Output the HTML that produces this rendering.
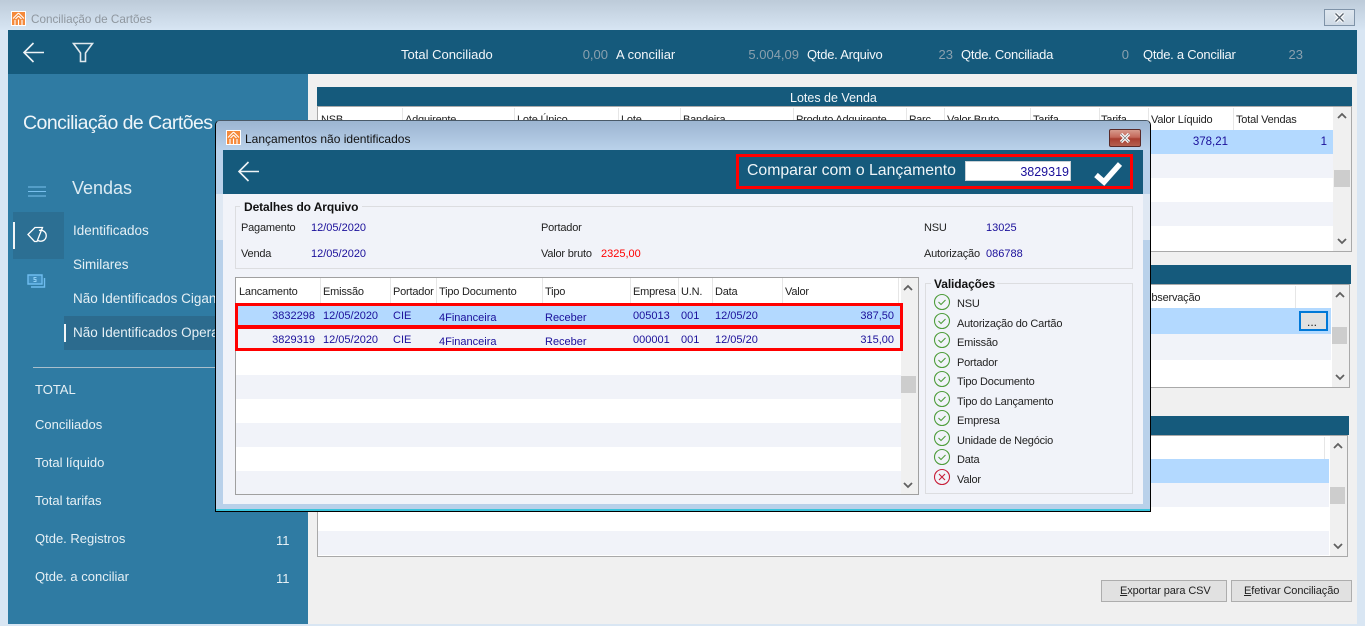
<!DOCTYPE html>
<html lang="pt"><head><meta charset="utf-8"><title>Conciliação de Cartões</title>
<style>
html,body{margin:0;padding:0;width:1365px;height:626px;overflow:hidden;background:#d9e6f3}
body{position:relative;font-family:"Liberation Sans",Arial,sans-serif;font-size:11px;color:#222}
div,span,svg{position:absolute;box-sizing:border-box}
.t{white-space:nowrap;line-height:16px;height:16px}
.n{color:#1a0f9a;font-size:11px;margin-top:1px}
.w{color:#f2f7fa}
.h{color:#222;font-size:11px;letter-spacing:-.2px;margin-top:1px}
.sep{width:1px;background:#e6e6e6}
.m{color:#e6f0f5;font-size:13.500px;margin-top:1px}
.s{color:#e6f0f5;font-size:13px}
.top{color:#f2f7fa;font-size:13px;top:47px}
.tq{letter-spacing:-.25px}
.gv{color:#8aa0ae;font-size:13px;top:47px}
</style></head><body>
<!-- window chrome -->
<div style="left:0;top:0;width:1365px;height:30px;background:linear-gradient(#bdcbd9,#d7e5f3)"></div>
<div style="left:11px;top:11px;width:15px;height:15px;background:#fff"></div>
<svg style="left:12px;top:12px" width="13" height="13" viewBox="0 0 13 13"><rect width="13" height="13" fill="#f58a3c"/><path d="M6.500 1L1 6.500M6.500 1L12 6.500M6.500 4L3.500 7M6.500 4L9.500 7M3 8v5M6.500 7.500V13M10 8v5" stroke="#fff" stroke-width="1.100" fill="none"/></svg>
<span class="t" style="left:31px;top:12px;color:#8f979f;font-size:11.700px">Conciliação de Cartões</span>
<div style="left:1324px;top:9px;width:31px;height:17px;border:1px solid #7f93a8;background:linear-gradient(#dfe7ef,#cdd9e5)"></div>
<svg style="left:1334px;top:12px" width="11" height="11" viewBox="0 0 11 11"><path d="M1.500 1.500l8 8M9.500 1.500l-8 8" stroke="#fff" stroke-width="3.600"/><path d="M1.500 1.500l8 8M9.500 1.500l-8 8" stroke="#59636e" stroke-width="1.300"/></svg>

<div style="left:8px;top:30px;width:1349px;height:44px;background:#155a7c"></div>
<svg style="left:22px;top:42px" width="23" height="21" viewBox="0 0 23 21"><path d="M22 10.500H2M11.500 1L2 10.500 11.500 20" fill="none" stroke="#eef3f6" stroke-width="1.600"/></svg>
<svg style="left:72px;top:42px" width="22" height="21" viewBox="0 0 22 21"><path d="M1.500 1.500h19l-7 9.500v8.500h-5V11z" fill="none" stroke="#dfe8ed" stroke-width="1.600"/></svg>
<span class="t top" style="left:401px">Total Conciliado</span>
<span class="t gv" style="right:757px">0,00</span>
<span class="t top" style="left:616px">A conciliar</span>
<span class="t gv" style="right:566px">5.004,09</span>
<span class="t top tq" style="left:807px">Qtde. Arquivo</span>
<span class="t gv" style="right:412px">23</span>
<span class="t top tq" style="left:961px">Qtde. Conciliada</span>
<span class="t gv" style="right:236px">0</span>
<span class="t top tq" style="left:1143px">Qtde. a Conciliar</span>
<span class="t gv" style="right:62px">23</span>

<!-- sidebar -->
<div style="left:8px;top:74px;width:300px;height:550px;background:#2f7ba3"></div>
<span class="t" style="left:23px;top:111px;line-height:24px;height:24px;font-size:19.500px;letter-spacing:-.55px;color:#eef5f9">Conciliação de Cartões</span>
<svg style="left:28px;top:186px" width="18" height="11" viewBox="0 0 18 11"><path d="M0 1h18M0 5.500h18M0 10h18" stroke="#79c0ee" stroke-width="1"/></svg>
<span class="t" style="left:72px;top:176px;line-height:24px;height:24px;font-size:18px;color:#dcebf3">Vendas</span>
<div style="left:13px;top:212px;width:51px;height:47px;background:#2c6f93"></div>
<div style="left:13px;top:222px;width:2px;height:27px;background:#f2f5f7"></div>
<svg style="left:27px;top:226px" width="20" height="17" viewBox="0 0 20 17"><path d="M1 8.500L8 1.500h7.500L10 15.500H7.500z" fill="none" stroke="#fff" stroke-width="1.300"/><path d="M12 4.500a5.500 5.500 0 1 1-1 10" fill="none" stroke="#fff" stroke-width="1.300"/></svg>
<svg style="left:27px;top:274px" width="19" height="14" viewBox="0 0 19 14"><path d="M1 1h14v9H1z" fill="#3f8dbd" stroke="#6fbdf0" stroke-width="1.400"/><path d="M17.500 4v9H4" fill="none" stroke="#6fbdf0" stroke-width="1.400"/><path d="M9.500 3.500H7v2h2v2H6.500" fill="none" stroke="#8fd0f5" stroke-width="1"/></svg>
<span class="t m" style="left:73px;top:222px">Identificados</span>
<span class="t m" style="left:73px;top:256px">Similares</span>
<span class="t m" style="left:73px;top:290px">Não Identificados Ciganos</span>
<div style="left:64px;top:316px;width:155px;height:34px;background:#2c6b8e"></div>
<div style="left:64px;top:324px;width:2px;height:18px;background:#f2f5f7"></div>
<span class="t m" style="left:73px;top:324px">Não Identificados Operadora</span>
<div style="left:33px;top:367px;width:185px;height:1px;background:#a9bfcc"></div>
<span class="t s" style="left:35px;top:382px">TOTAL</span>
<span class="t s" style="left:35px;top:417px">Conciliados</span>
<span class="t s" style="left:35px;top:455px">Total líquido</span>
<span class="t s" style="left:35px;top:493px">Total tarifas</span>
<span class="t s" style="left:35px;top:531px">Qtde. Registros</span>
<span class="t s" style="left:35px;top:569px">Qtde. a conciliar</span>
<span class="t s" style="left:276px;top:533px">11</span>
<span class="t s" style="left:276px;top:571px">11</span>

<!-- main -->
<div style="left:308px;top:74px;width:1049px;height:550px;background:#f0f0f0"></div>
<!-- Lotes -->
<div style="left:317px;top:87px;width:1035px;height:19px;background:#155a7c"></div>
<span class="t w" style="left:790px;top:90px;font-size:12.500px">Lotes de Venda</span>
<div style="left:317px;top:106px;width:1035px;height:146px;background:#fff;border:1px solid #a9a9a9"></div>
<div style="left:318px;top:130px;width:1015px;height:24px;background:#b3d9ff"></div>
<div style="left:318px;top:154px;width:1015px;height:24px;background:#f1f3f9"></div>
<div style="left:318px;top:202px;width:1015px;height:24px;background:#f1f3f9"></div>
<div style="left:1333px;top:107px;width:18px;height:144px;background:#f0f0f0"></div>
<div style="left:1334px;top:170px;width:16px;height:17px;background:#cdcdcd"></div>
<svg style="left:1336px;top:112px" width="12" height="8" viewBox="0 0 12 8"><path d="M2 6l4-4 4 4" fill="none" stroke="#606060" stroke-width="1.800"/></svg>
<svg style="left:1336px;top:237px" width="12" height="8" viewBox="0 0 12 8"><path d="M2 2l4 4 4-4" fill="none" stroke="#606060" stroke-width="1.800"/></svg>
<div class="sep" style="left:402px;top:108px;height:22px"></div><div class="sep" style="left:514px;top:108px;height:22px"></div><div class="sep" style="left:618px;top:108px;height:22px"></div><div class="sep" style="left:680px;top:108px;height:22px"></div><div class="sep" style="left:793px;top:108px;height:22px"></div><div class="sep" style="left:906px;top:108px;height:22px"></div><div class="sep" style="left:944px;top:108px;height:22px"></div><div class="sep" style="left:1030px;top:108px;height:22px"></div><div class="sep" style="left:1099px;top:108px;height:22px"></div><div class="sep" style="left:1148px;top:108px;height:22px"></div><div class="sep" style="left:1233px;top:108px;height:22px"></div>
<span class="t h" style="left:321px;top:111px">NSB</span><span class="t h" style="left:405px;top:111px">Adquirente</span><span class="t h" style="left:517px;top:111px">Lote Único</span><span class="t h" style="left:621px;top:111px">Lote</span><span class="t h" style="left:683px;top:111px">Bandeira</span><span class="t h" style="left:796px;top:111px">Produto Adquirente</span><span class="t h" style="left:909px;top:111px">Parc</span><span class="t h" style="left:947px;top:111px">Valor Bruto</span><span class="t h" style="left:1033px;top:111px">Tarifa</span><span class="t h" style="left:1101px;top:111px">Tarifa</span><span class="t h" style="left:1151px;top:111px">Valor Líquido</span><span class="t h" style="left:1236px;top:111px">Total Vendas</span>
<span class="t n" style="right:137px;top:134px;font-size:11.500px;margin-top:0">378,21</span><span class="t n" style="right:38px;top:134px;font-size:11.500px;margin-top:0">1</span>

<!-- panel 2 -->
<div style="left:317px;top:265px;width:1034px;height:19px;background:#155a7c"></div>
<div style="left:317px;top:284px;width:1033px;height:104px;background:#fff;border:1px solid #a9a9a9"></div>
<div style="left:318px;top:308px;width:1013px;height:26px;background:#b3d9ff"></div>
<div style="left:318px;top:334px;width:1013px;height:26px;background:#f1f3f9"></div>
<div class="sep" style="left:1295px;top:286px;height:22px"></div>
<span class="t h" style="left:1143px;top:289px">Observação</span>
<div style="left:1299px;top:311px;width:29px;height:20px;background:#e1e1e1;border:2px solid #0078d7"></div>
<span class="t" style="left:1307px;top:314px;color:#222;font-size:12px">...</span>
<div style="left:1332px;top:285px;width:17px;height:102px;background:#f0f0f0"></div>
<div style="left:1332px;top:327px;width:15px;height:17px;background:#cdcdcd"></div>
<svg style="left:1334px;top:291px" width="12" height="8" viewBox="0 0 12 8"><path d="M2 6l4-4 4 4" fill="none" stroke="#606060" stroke-width="1.800"/></svg>
<svg style="left:1334px;top:373px" width="12" height="8" viewBox="0 0 12 8"><path d="M2 2l4 4 4-4" fill="none" stroke="#606060" stroke-width="1.800"/></svg>

<!-- panel 3 -->
<div style="left:317px;top:416px;width:1032px;height:19px;background:#155a7c"></div>
<div style="left:317px;top:435px;width:1031px;height:122px;background:#fff;border:1px solid #a9a9a9"></div>
<div style="left:318px;top:459px;width:1011px;height:24px;background:#b3d9ff"></div>
<div style="left:318px;top:483px;width:1011px;height:24px;background:#f1f3f9"></div>
<div style="left:318px;top:531px;width:1011px;height:24px;background:#f1f3f9"></div>
<div class="sep" style="left:1324px;top:437px;height:22px"></div>
<div style="left:1330px;top:436px;width:17px;height:120px;background:#f0f0f0"></div>
<div style="left:1330px;top:487px;width:15px;height:17px;background:#cdcdcd"></div>
<svg style="left:1332px;top:442px" width="12" height="8" viewBox="0 0 12 8"><path d="M2 6l4-4 4 4" fill="none" stroke="#606060" stroke-width="1.800"/></svg>
<svg style="left:1332px;top:542px" width="12" height="8" viewBox="0 0 12 8"><path d="M2 2l4 4 4-4" fill="none" stroke="#606060" stroke-width="1.800"/></svg>

<!-- buttons -->
<div style="left:1101px;top:580px;width:126px;height:22px;background:#e1e1e1;border:1px solid #adadad"></div>
<span class="t" style="left:1120px;top:583px;color:#222;font-size:11px;letter-spacing:-.1px"><u>E</u>xportar para CSV</span>
<div style="left:1231px;top:580px;width:121px;height:22px;background:#e1e1e1;border:1px solid #adadad"></div>
<span class="t" style="left:1244px;top:583px;color:#222;font-size:11px;letter-spacing:-.1px"><u>E</u>fetivar Conciliação</span>

<!-- dialog -->
<div style="left:215px;top:120px;width:936px;height:392px;background:#b9d1ea;border:1px solid #000;border-top-color:#4a5a68;border-radius:5px 5px 0 0"></div>
<div style="left:216px;top:121px;width:934px;height:29px;background:linear-gradient(#9cb5d1,#b9d1ea);border-radius:4px 4px 0 0"></div>
<div style="left:216px;top:509px;width:934px;height:2px;background:#3cc4dc"></div>
<div style="left:216px;top:194px;width:7px;height:46px;background:#dfe8f3"></div>
<div style="left:1143px;top:194px;width:7px;height:46px;background:#dfe8f3"></div>
<div style="left:226px;top:130px;width:15px;height:15px;background:#fff"></div>
<svg style="left:227px;top:131px" width="13" height="13" viewBox="0 0 13 13"><rect width="13" height="13" fill="#f58a3c"/><path d="M6.500 1L1 6.500M6.500 1L12 6.500M6.500 4L3.500 7M6.500 4L9.500 7M3 8v5M6.500 7.500V13M10 8v5" stroke="#fff" stroke-width="1.100" fill="none"/></svg>
<span class="t" style="left:245px;top:131px;color:#111;font-size:12px">Lançamentos não identificados</span>
<div style="left:1109px;top:129px;width:32px;height:18px;border:1px solid #5a2a28;border-radius:2px;background:linear-gradient(#d79a8c 0,#c4685a 45%,#a83e30 55%,#b5604f 100%)"></div>
<svg style="left:1118px;top:132px" width="14" height="12" viewBox="0 0 14 12"><path d="M3 2l8 8M11 2l-8 8" stroke="#fff" stroke-width="3.200"/><path d="M3 2l8 8M11 2l-8 8" stroke="#777" stroke-width=".8"/></svg>

<div style="left:223px;top:150px;width:920px;height:44px;background:#155a7c"></div>
<svg style="left:237px;top:161px" width="23" height="21" viewBox="0 0 23 21"><path d="M22 10.500H2M11.500 1L2 10.500 11.500 20" fill="none" stroke="#eef3f6" stroke-width="1.600"/></svg>
<div style="left:736px;top:154px;width:397px;height:35px;border:3px solid #f00"></div>
<span class="t" style="left:747px;top:162px;height:18px;line-height:18px;font-size:15.800px;color:#eef4f7">Comparar com o Lançamento</span>
<div style="left:965px;top:161px;width:106px;height:20px;background:#fff;border:1px solid #c8d0d6"></div>
<span class="t n" style="right:296px;top:164px;font-size:12.500px;margin-top:0">3829319</span>
<svg style="left:1093px;top:161px" width="30" height="25" viewBox="0 0 30 25"><path d="M3 14l8 7L27 3" fill="none" stroke="#fff" stroke-width="5.500"/></svg>

<div style="left:223px;top:194px;width:920px;height:310px;background:#f1f3f9"></div>
<!-- details -->
<div style="left:235px;top:206px;width:898px;height:63px;border:1px solid #dcdde0"></div>
<div style="left:240px;top:200px;width:122px;height:12px;background:#f1f3f9"></div>
<span class="t" style="left:244px;top:199px;font-weight:bold;color:#111;font-size:12px;letter-spacing:-.1px">Detalhes do Arquivo</span>
<span class="t h" style="left:241px;top:219px">Pagamento</span><span class="t n" style="left:311px;top:219px">12/05/2020</span>
<span class="t h" style="left:241px;top:245px">Venda</span><span class="t n" style="left:311px;top:245px">12/05/2020</span>
<span class="t h" style="left:541px;top:219px">Portador</span>
<span class="t h" style="left:541px;top:245px">Valor bruto</span><span class="t" style="left:601px;top:246px;color:#f00;font-size:11px">2325,00</span>
<span class="t h" style="left:924px;top:219px">NSU</span><span class="t n" style="left:986px;top:219px">13025</span>
<span class="t h" style="left:924px;top:245px">Autorização</span><span class="t n" style="left:986px;top:245px">086788</span>

<!-- grid -->
<div style="left:235px;top:277px;width:684px;height:218px;background:#fff;border:1px solid #a0a0a0"></div>
<div style="left:236px;top:305px;width:665px;height:22px;background:#b3d9ff"></div>
<div style="left:236px;top:327px;width:665px;height:24px;background:#f1f3f9"></div>
<div style="left:236px;top:375px;width:665px;height:24px;background:#f1f3f9"></div>
<div style="left:236px;top:423px;width:665px;height:24px;background:#f1f3f9"></div>
<div style="left:236px;top:471px;width:665px;height:23px;background:#f1f3f9"></div>
<div class="sep" style="left:320px;top:278px;height:25px"></div><div class="sep" style="left:390px;top:278px;height:25px"></div><div class="sep" style="left:436px;top:278px;height:25px"></div><div class="sep" style="left:542px;top:278px;height:25px"></div><div class="sep" style="left:630px;top:278px;height:25px"></div><div class="sep" style="left:678px;top:278px;height:25px"></div><div class="sep" style="left:712px;top:278px;height:25px"></div><div class="sep" style="left:782px;top:278px;height:25px"></div><div class="sep" style="left:898px;top:278px;height:25px"></div>
<span class="t h" style="left:239px;top:283px">Lancamento</span><span class="t h" style="left:323px;top:283px">Emissão</span><span class="t h" style="left:393px;top:283px">Portador</span><span class="t h" style="left:439px;top:283px">Tipo Documento</span><span class="t h" style="left:545px;top:283px">Tipo</span><span class="t h" style="left:633px;top:283px">Empresa</span><span class="t h" style="left:681px;top:283px">U.N.</span><span class="t h" style="left:715px;top:283px">Data</span><span class="t h" style="left:785px;top:283px">Valor</span>
<span class="t n" style="right:1050px;top:307px">3832298</span><span class="t n" style="left:323px;top:307px">12/05/2020</span><span class="t n" style="left:393px;top:307px">CIE</span><span class="t n" style="left:439px;top:309px">4Financeira</span><span class="t n" style="left:545px;top:309px">Receber</span><span class="t n" style="left:633px;top:307px">005013</span><span class="t n" style="left:681px;top:307px">001</span><span class="t n" style="left:715px;top:307px">12/05/20</span><span class="t n" style="right:471px;top:307px">387,50</span>
<span class="t n" style="right:1050px;top:331px">3829319</span><span class="t n" style="left:323px;top:331px">12/05/2020</span><span class="t n" style="left:393px;top:331px">CIE</span><span class="t n" style="left:439px;top:333px">4Financeira</span><span class="t n" style="left:545px;top:333px">Receber</span><span class="t n" style="left:633px;top:331px">000001</span><span class="t n" style="left:681px;top:331px">001</span><span class="t n" style="left:715px;top:331px">12/05/20</span><span class="t n" style="right:471px;top:331px">315,00</span>
<div style="left:901px;top:278px;width:17px;height:216px;background:#f0f0f0"></div>
<div style="left:901px;top:376px;width:15px;height:17px;background:#cdcdcd"></div>
<div style="left:235px;top:303px;width:668px;height:25px;border:3px solid #f00"></div>
<div style="left:235px;top:326px;width:668px;height:25px;border:3px solid #f00"></div>
<svg style="left:902px;top:284px" width="12" height="8" viewBox="0 0 12 8"><path d="M2 6l4-4 4 4" fill="none" stroke="#606060" stroke-width="1.800"/></svg>
<svg style="left:902px;top:481px" width="12" height="8" viewBox="0 0 12 8"><path d="M2 2l4 4 4-4" fill="none" stroke="#606060" stroke-width="1.800"/></svg>

<!-- validations -->
<div style="left:925px;top:283px;width:208px;height:211px;border:1px solid #dcdde0"></div>
<div style="left:931px;top:278px;width:66px;height:12px;background:#f1f3f9"></div>
<span class="t" style="left:934px;top:276px;font-weight:bold;color:#111;font-size:12px;letter-spacing:-.1px">Validações</span>
<svg style="left:933px;top:293px" width="18" height="194" viewBox="0 0 18 194" fill="none" stroke-width="1.100">
<g stroke="#4f9d3c">
<circle cx="9" cy="9" r="7.500"/><path d="M5.500 9l2.500 2.500 4.500-4.500"/>
<circle cx="9" cy="28" r="7.500"/><path d="M5.500 28l2.500 2.500 4.500-4.500"/>
<circle cx="9" cy="47" r="7.500"/><path d="M5.500 47l2.500 2.500 4.500-4.500"/>
<circle cx="9" cy="67" r="7.500"/><path d="M5.500 67l2.500 2.500 4.500-4.500"/>
<circle cx="9" cy="86" r="7.500"/><path d="M5.500 86l2.500 2.500 4.500-4.500"/>
<circle cx="9" cy="106" r="7.500"/><path d="M5.500 106l2.500 2.500 4.500-4.500"/>
<circle cx="9" cy="125" r="7.500"/><path d="M5.500 125l2.500 2.500 4.500-4.500"/>
<circle cx="9" cy="145" r="7.500"/><path d="M5.500 145l2.500 2.500 4.500-4.500"/>
<circle cx="9" cy="164" r="7.500"/><path d="M5.500 164l2.500 2.500 4.500-4.500"/>
</g>
<g stroke="#c8203a"><circle cx="9" cy="184" r="7.500"/><path d="M6 181l6 6M12 181l-6 6"/></g>
</svg>
<span class="t h" style="left:957px;top:295px">NSU</span>
<span class="t h" style="left:957px;top:315px">Autorização do Cartão</span>
<span class="t h" style="left:957px;top:334px">Emissão</span>
<span class="t h" style="left:957px;top:354px">Portador</span>
<span class="t h" style="left:957px;top:373px">Tipo Documento</span>
<span class="t h" style="left:957px;top:393px">Tipo do Lançamento</span>
<span class="t h" style="left:957px;top:412px">Empresa</span>
<span class="t h" style="left:957px;top:432px">Unidade de Negócio</span>
<span class="t h" style="left:957px;top:451px">Data</span>
<span class="t h" style="left:957px;top:471px">Valor</span>
</body></html>
